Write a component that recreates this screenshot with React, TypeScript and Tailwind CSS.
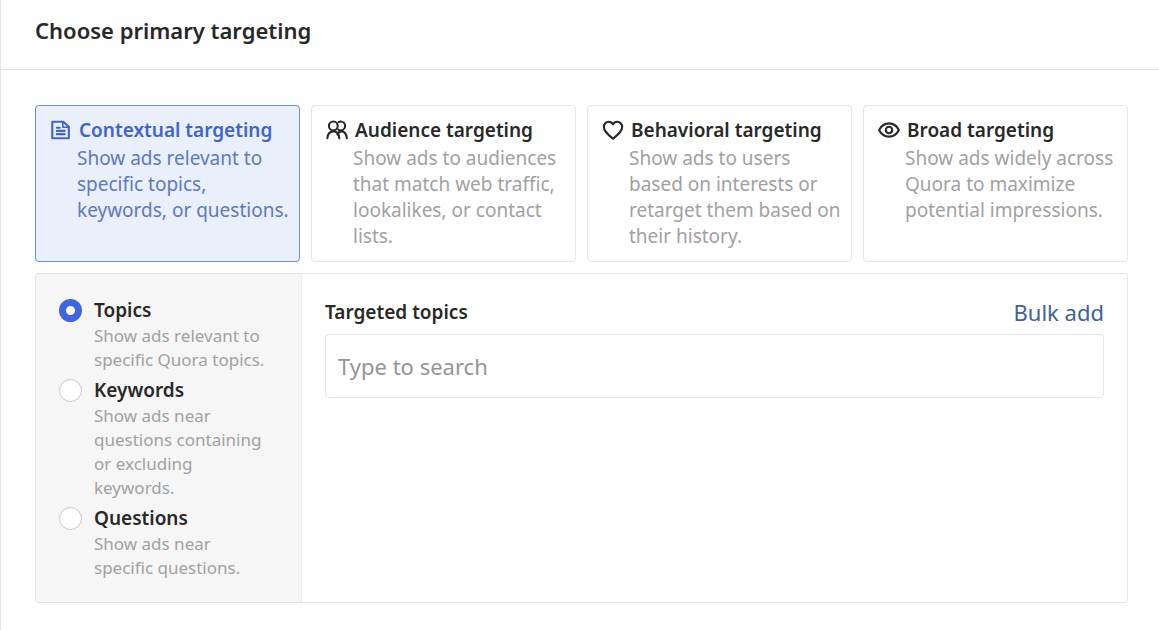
import { useState, type ReactNode } from "react";

type Card = { id: string; title: string; text: string; icon: ReactNode };
type Option = { id: string; title: string; text: string };

const iconProps = {
  viewBox: "0 0 24 24",
  fill: "none",
  stroke: "currentColor",
  strokeWidth: 2.3,
  strokeLinecap: "round" as const,
  strokeLinejoin: "round" as const,
  "aria-hidden": true,
  className: "size-[22px] shrink-0",
};

const DocumentIcon = () => (
  <svg {...iconProps}>
    <path d="M2.500 3h12l6 5.500V21h-18z" />
    <path d="M14 3v6h6.500" strokeWidth="1.800" />
    <path d="M7.500 9.500h3M7.500 13h8.500M7.500 16.500h8.500" />
  </svg>
);

const PeopleIcon = () => (
  <svg {...iconProps}>
    <circle cx="8" cy="7.500" r="4.800" />
    <path d="M1.500 21c.5-5 2.700-7.500 6.500-7.500s6 2.500 6.500 7.500" />
    <path d="M14 3.200c.6-.3 1.300-.5 2-.5a4.800 4.800 0 0 1 0 9.600c-1 0-1.900-.3-2.600-.8" />
    <path d="M12.500 17c.8-2.300 2.200-3.500 4.200-3.500 3.200 0 5.500 2.700 6 7.500" />
  </svg>
);

const HeartIcon = () => (
  <svg {...iconProps}>
    <path d="M12 21.500C7 17.500 2 13.800 2 8.800c0-3.200 2.400-5.800 5.300-5.800 2 0 3.800 1 4.700 2.800C12.900 4 14.700 3 16.700 3 19.600 3 22 5.600 22 8.800c0 5-5 8.700-10 12.700z" />
  </svg>
);

const EyeIcon = () => (
  <svg {...iconProps}>
    <path d="M1.200 12C3.500 7.500 7.300 4.800 12 4.800s8.500 2.700 10.800 7.200c-2.300 4.500-6.100 7.200-10.800 7.200S3.500 16.500 1.200 12z" />
    <circle cx="12" cy="12" r="3.500" />
  </svg>
);

const cards: Card[] = [
  { id: "contextual", title: "Contextual targeting", text: "Show ads relevant to specific topics, keywords, or questions.", icon: <DocumentIcon /> },
  { id: "audience", title: "Audience targeting", text: "Show ads to audiences that match web traffic, lookalikes, or contact lists.", icon: <PeopleIcon /> },
  { id: "behavioral", title: "Behavioral targeting", text: "Show ads to users based on interests or retarget them based on their history.", icon: <HeartIcon /> },
  { id: "broad", title: "Broad targeting", text: "Show ads widely across Quora to maximize potential impressions.", icon: <EyeIcon /> },
];

const options: Option[] = [
  { id: "topics", title: "Topics", text: "Show ads relevant to specific Quora topics." },
  { id: "keywords", title: "Keywords", text: "Show ads near questions containing or excluding keywords." },
  { id: "questions", title: "Questions", text: "Show ads near specific questions." },
];

export default function App() {
  const [card, setCard] = useState("contextual");
  const [option, setOption] = useState("topics");

  return (
    <main className="min-h-screen border-l border-[#e6e6e6] bg-[#fefefe] font-['Noto_Sans','Open_Sans',sans-serif] text-[#282829]">
      <header className="border-b border-[#e4e5e6] px-[34px] pt-[15px] pb-6">
        <h1 className="text-[22px] leading-[30px] font-semibold">Choose primary targeting</h1>
      </header>

      <div className="pt-[35px] pr-[31px] pb-6 pl-[34px]">
        <div className="grid grid-cols-4 gap-[11px]">
          {cards.map((c) => {
            const on = c.id === card;
            return (
              <button
                key={c.id}
                type="button"
                aria-pressed={on}
                onClick={() => setCard(c.id)}
                className={`flex flex-col rounded-[4px] border pt-[11px] pr-2 pb-3 pl-[14px] text-left ${
                  on ? "border-[#6f8fce] bg-[#e9effb] text-[#4164c8]" : "border-[#e4e5e6] bg-white text-[#282829]"
                }`}
              >
                <span className="flex items-center gap-[7px] text-[19px] leading-[26px] font-semibold">
                  {c.icon}
                  <span className="whitespace-nowrap">{c.title}</span>
                </span>
                <span className={`mt-[2px] pl-[27px] text-[19px] leading-[26px] ${on ? "text-[#6079be]" : "text-[#a0a1a3]"}`}>
                  {c.text}
                </span>
              </button>
            );
          })}
        </div>

        <section className="mt-[11px] flex rounded-[3px] border border-[#e4e5e6] bg-white">
          <div
            role="radiogroup"
            aria-label="Contextual targeting"
            className="flex w-[266px] shrink-0 flex-col gap-1 border-r border-[#ececec] bg-[#f6f6f6] pt-[22px] pr-7 pb-[22px] pl-[23px]"
          >
            {options.map((o) => (
              <label key={o.id} htmlFor={o.id} className="flex gap-3">
                <input
                  id={o.id}
                  type="radio"
                  name="target-type"
                  checked={o.id === option}
                  onChange={() => setOption(o.id)}
                  className="mt-[3px] size-[23px] shrink-0 appearance-none rounded-full border border-[#c6c7c9] bg-white checked:border-[7px] checked:border-[#3f66e0]"
                />
                <span>
                  <span className="block text-[19px] leading-7 font-semibold">{o.title}</span>
                  <span className="block text-[17px] leading-6 text-[#a0a1a3]">{o.text}</span>
                </span>
              </label>
            ))}
          </div>

          <div className="min-w-0 flex-1 px-[23px] pt-6">
            <div className="flex items-center justify-between">
              <label htmlFor="search" className="text-[19px] leading-7 font-semibold">
                Targeted topics
              </label>
              <button type="button" className="text-[22px] leading-7 text-[#426199]">
                Bulk add
              </button>
            </div>
            <input
              id="search"
              type="text"
              placeholder="Type to search"
              className="mt-2 h-16 w-full rounded-[4px] border border-[#e4e5e6] bg-white px-3 text-[22px] placeholder:text-[#939598]"
            />
          </div>
        </section>
      </div>
    </main>
  );
}
